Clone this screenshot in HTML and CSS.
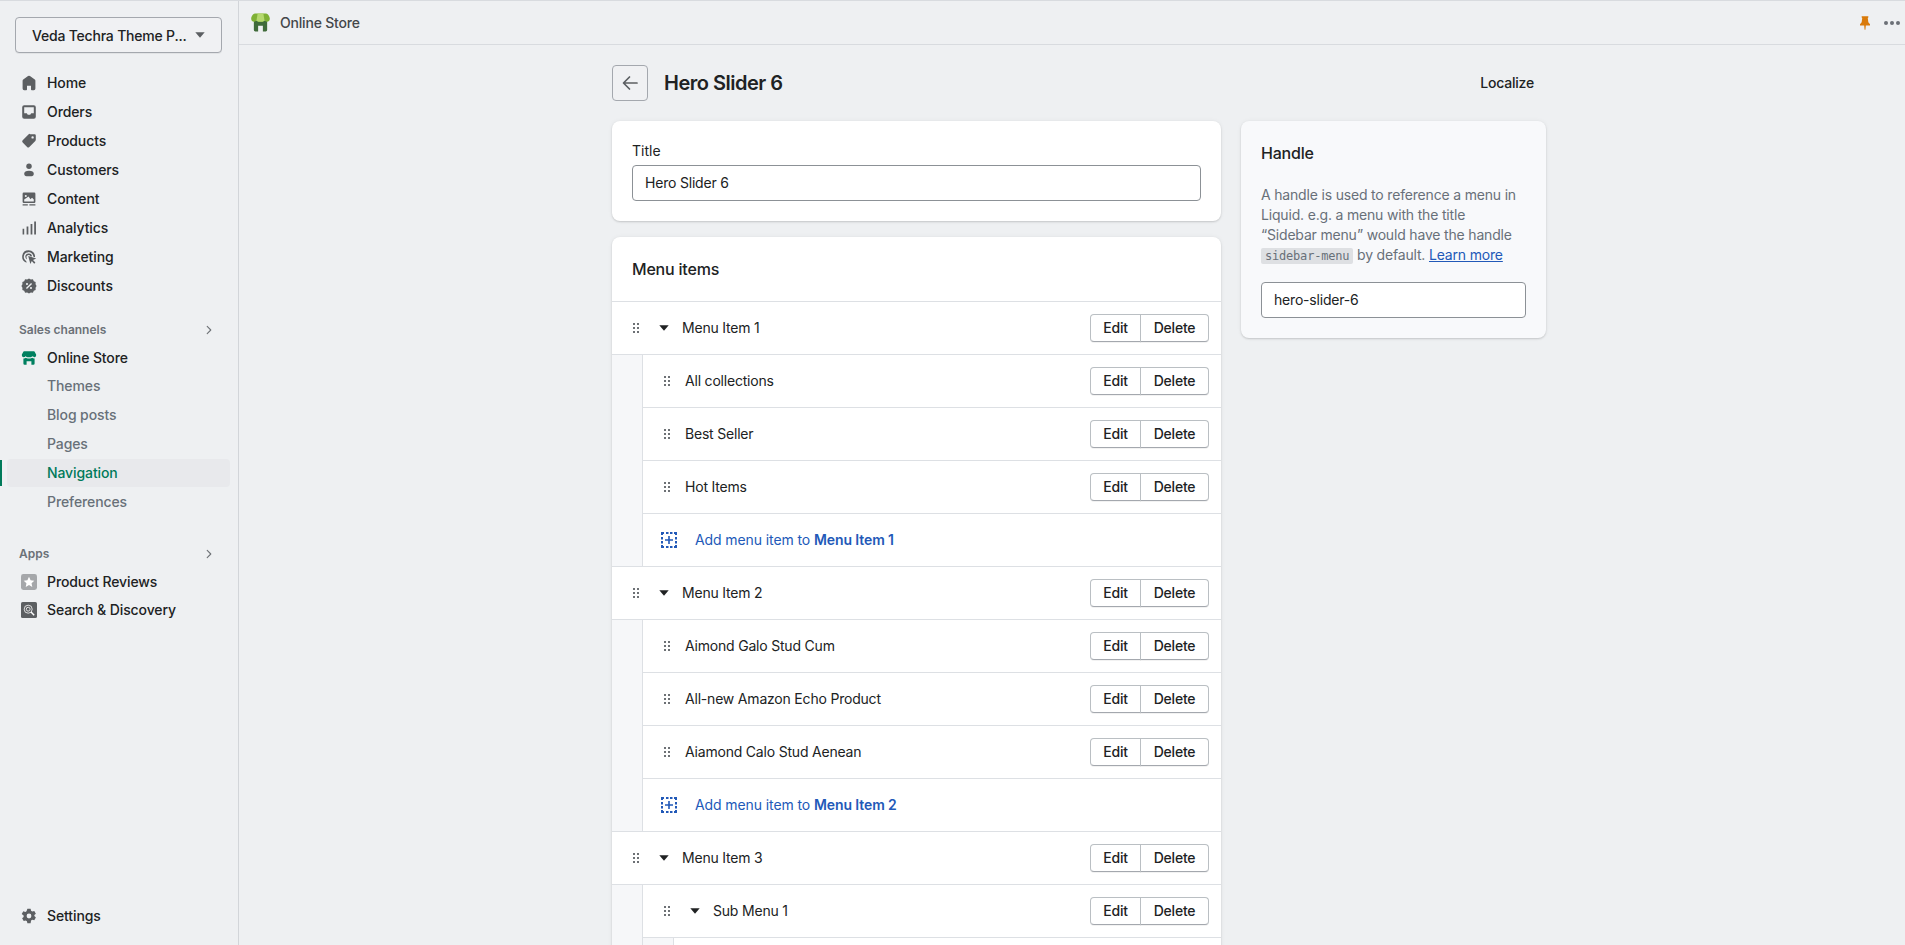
FILE: index.html
```html
<!DOCTYPE html>
<html lang="en">
<head>
  <meta charset="UTF-8" />
  <title>Hero Slider 6 – Navigation</title>
  <link rel="stylesheet" href="styles.css">
</head>
<body>
  <svg class="sprites" aria-hidden="true">
    <symbol id="i-drag" viewBox="0 0 7 10"><path d="M0 0h2v2H0zM4 0h2v2H4zM0 4h2v2H0zM4 4h2v2H4zM0 8h2v2H0zM4 8h2v2H4z"/></symbol>
    <symbol id="i-caret" viewBox="0 0 10 6"><path d="M0.300 0.200h9.400L5 5.800z"/></symbol>
    <symbol id="i-chevron" viewBox="0 0 20 20"><path d="M7 4l6 6-6 6" fill="none" stroke="currentColor" stroke-width="1.800" stroke-linecap="round" stroke-linejoin="round"/></symbol>
    <symbol id="i-add" viewBox="0 0 18 18">
      <path d="M1 1h3v2H3v1H1zM6 1h2.500v2H6zM10 1h2.500v2H10zM14 1h3v3h-2V3h-1zM1 6h2v2.500H1zM15 6h2v2.500h-2zM1 10h2v2.500H1zM15 10h2v2.500h-2zM1 14h2v1h1v2H1zM15 14h2v3h-3v-2h1zM6 15h2.500v2H6zM10 15h2.500v2H10z"/>
      <path d="M8.200 5h1.600v3.200H13v1.600H9.800V13H8.200V9.800H5V8.200h3.200z"/>
    </symbol>
  </svg>

  <div class="frame">
    <aside class="sidebar">
      <button class="store-picker" type="button">
        <span>Veda Techra Theme P...</span>
        <svg class="picker-caret" viewBox="0 0 10 6"><use href="#i-caret"/></svg>
      </button>

      <nav class="nav-main">
        <a class="nav-item">
          <svg class="nav-icon" viewBox="0 0 20 20"><path d="M18 7.300V17a2 2 0 0 1-2 2h-2.500a1 1 0 0 1-1-1v-4.500h-5V18a1 1 0 0 1-1 1H4a2 2 0 0 1-2-2V7.300a2 2 0 0 1 .800-1.600l6-4.400a2 2 0 0 1 2.400 0l6 4.400a2 2 0 0 1 .800 1.600z"/></svg>
          Home
        </a>
        <a class="nav-item">
          <svg class="nav-icon" viewBox="0 0 20 20"><path fill-rule="evenodd" d="M4 1.500h12A2.500 2.500 0 0 1 18.500 4v12a2.500 2.500 0 0 1-2.500 2.500H4A2.500 2.500 0 0 1 1.500 16V4A2.500 2.500 0 0 1 4 1.500zm0 2.500v7.500h3.200l1.300 2h3l1.300-2H16V4z"/></svg>
          Orders
        </a>
        <a class="nav-item">
          <svg class="nav-icon" viewBox="0 0 20 20"><path fill-rule="evenodd" d="M11.500 1.500H17a1.500 1.500 0 0 1 1.500 1.500v5.500a2 2 0 0 1-.600 1.400l-7.500 7.500a2 2 0 0 1-2.800 0l-5.500-5.500a2 2 0 0 1 0-2.800l7.500-7.500a2 2 0 0 1 1.400-.600zM14.500 7a1.500 1.500 0 1 0 0-3 1.500 1.500 0 0 0 0 3z"/></svg>
          Products
        </a>
        <a class="nav-item">
          <svg class="nav-icon" viewBox="0 0 20 20"><circle cx="10" cy="5.200" r="3.400"/><path d="M10 11c3.900 0 6 1.500 6 3.800 0 1.700-1.100 3-2.800 3H6.800C5.100 17.800 4 16.500 4 14.800 4 12.500 6.100 11 10 11z"/></svg>
          Customers
        </a>
        <a class="nav-item">
          <svg class="nav-icon" viewBox="0 0 20 20"><path fill-rule="evenodd" d="M3.500 2h13A1.500 1.500 0 0 1 18 3.500v10a1.500 1.500 0 0 1-1.500 1.500h-13A1.500 1.500 0 0 1 2 13.500v-10A1.500 1.500 0 0 1 3.500 2zM4 10.500V13h12v-2.500l-2.200-2.200-2 2-2.300-3.300zM6 7.500a1.300 1.300 0 1 0 0-2.600 1.300 1.300 0 0 0 0 2.600z"/><path d="M2 16.500h6.500V18H2zM10.500 16.500H18V18h-7.500z"/></svg>
          Content
        </a>
        <a class="nav-item">
          <svg class="nav-icon" viewBox="0 0 20 20"><path d="M2 11h2v7H2zM7 8h2.200v10H7zM12 5h2.200v13H12zM16.500 2h2.200v16h-2.200z"/></svg>
          Analytics
        </a>
        <a class="nav-item">
          <svg class="nav-icon" viewBox="0 0 20 20"><path d="M9.500 1.500a8 8 0 0 0-2.500 15.600l-.500-2A6 6 0 1 1 15.500 9.700l2 .6A8 8 0 0 0 9.500 1.500z"/><path d="M9.500 5.500a4 4 0 0 0-2 7.500l-.400-2A2.200 2.200 0 1 1 11.700 9l2 .5a4 4 0 0 0-4.200-4z"/><path d="M9 8.800l10 3-4 1.800 3 3.400-1.500 1.300-3-3.300-1.800 3.700z"/></svg>
          Marketing
        </a>
        <a class="nav-item">
          <svg class="nav-icon" viewBox="0 0 20 20"><path fill-rule="evenodd" d="M10 .500l2.300 1.300 2.600-.100 1.100 2.300 2.300 1.100-.100 2.600L19.500 10l-1.300 2.300.1 2.600-2.300 1.100-1.100 2.300-2.600-.100L10 19.500l-2.300-1.300-2.600.1L4 16l-2.300-1.100.1-2.600L.5 10l1.300-2.300-.1-2.600L4 4l1.100-2.300 2.600.1zM12.600 6.200L6.200 12.600l1.200 1.200 6.400-6.400zM7.500 8.800a1.300 1.300 0 1 0 0-2.600 1.300 1.300 0 0 0 0 2.600zM12.500 13.800a1.300 1.300 0 1 0 0-2.600 1.300 1.300 0 0 0 0 2.600z"/></svg>
          Discounts
        </a>
      </nav>

      <div class="nav-heading">
        <span>Sales channels</span>
        <svg class="nav-chevron"><use href="#i-chevron"/></svg>
      </div>
      <a class="nav-item nav-item-short">
        <svg class="nav-icon nav-icon-green" viewBox="0 0 20 20"><path d="M4 1.500h12a1 1 0 0 1 .900.500l2 3.500c.400 2-.700 3.500-2.300 3.500-1 0-2-.500-2.500-1.500-.500 1-1.300 1.500-2.300 1.500H8.200c-1 0-1.800-.500-2.300-1.500C5.400 8.500 4.400 9 3.400 9 1.800 9 .700 7.500 1.100 5.500l2-3.500A1 1 0 0 1 4 1.500z"/><path d="M3 10.500c1.100.200 2.100-.100 3-.800.900.600 1.700.800 2.500.8h3c.800 0 1.600-.200 2.500-.8.900.700 1.900 1 3 .8V17a1.500 1.500 0 0 1-1.500 1.500H13v-4.500H7v4.500H4.500A1.500 1.500 0 0 1 3 17z"/></svg>
        <span class="nav-strong">Online Store</span>
      </a>
      <a class="nav-sub">Themes</a>
      <a class="nav-sub">Blog posts</a>
      <a class="nav-sub">Pages</a>
      <a class="nav-sub nav-sub-active">Navigation</a>
      <a class="nav-sub">Preferences</a>

      <div class="nav-heading nav-heading-apps">
        <span>Apps</span>
        <svg class="nav-chevron"><use href="#i-chevron"/></svg>
      </div>
      <a class="nav-item nav-item-short">
        <svg class="nav-icon" viewBox="0 0 20 20"><rect width="20" height="20" rx="3" fill="#a5a7aa"/><path d="M10 3.500l2 4.200 4.600.6-3.400 3.200.9 4.600-4.100-2.300-4.100 2.300.9-4.600-3.400-3.200 4.600-.6z" fill="#fff"/></svg>
        <span class="nav-strong">Product Reviews</span>
      </a>
      <a class="nav-item nav-item-short">
        <svg class="nav-icon" viewBox="0 0 20 20"><rect width="20" height="20" rx="2" fill="#5c5f62"/><g fill="none" stroke="#fff" stroke-width="1"><circle cx="9" cy="9" r="5"/><circle cx="9" cy="9" r="2.400"/><path d="M12.500 12.500l4 4" stroke-width="1.800"/></g></svg>
        <span class="nav-strong">Search &amp; Discovery</span>
      </a>

      <a class="nav-item nav-settings">
        <svg class="nav-icon" viewBox="0 0 20 20"><path fill-rule="evenodd" d="M8 1h4l.600 2.500 1.500.900 2.500-.700 2 3.400-1.900 1.800v1.200l1.900 1.800-2 3.400-2.500-.700-1.500.9L12 19H8l-.600-2.500-1.500-.9-2.500.700-2-3.400 1.900-1.800V9.400L.9 7.600l2-3.400 2.500.7 1.500-.9zM10 13a3 3 0 1 0 0-6 3 3 0 0 0 0 6z"/></svg>
        Settings
      </a>
    </aside>

    <div class="workspace">
      <header class="topbar">
        <svg class="topbar-logo" viewBox="0 0 20 20">
          <path d="M3 8h14v10a1.500 1.500 0 0 1-1.500 1.500h-3V13.500h-5v6h-3A1.500 1.500 0 0 1 3 18z" fill="#3f6b3a"/>
          <path d="M4 .500h12c1.500 0 3.800 3 3.800 5.500 0 2-1.400 3.200-3 3.200-1.100 0-2-.500-2.600-1.500-.500 1-1.200 1.500-2.200 1.500H8c-1 0-1.700-.500-2.200-1.500C5.200 8.700 4.300 9.200 3.200 9.200c-1.600 0-3-1.200-3-3.200C.2 3.500 2.500.5 4 .5z" fill="#7fb135"/>
          <path d="M7 .500h6l1.200 7.200c-.500 1-1.200 1.500-2.200 1.500H8c-1 0-1.700-.500-2.200-1.500z" fill="#b5d96e"/>
        </svg>
        <span class="topbar-title">Online Store</span>
        <div class="topbar-actions">
          <svg class="topbar-pin" viewBox="0 0 12 16"><path d="M2 0h8v1.500L9.300 2l.7 5 2 2.500V11H7l-.5 5h-1L5 11H0V9.500L2 7l.7-5L2 1.500z"/></svg>
          <span class="topbar-dots"><i></i><i></i><i></i></span>
        </div>
      </header>

      <main class="page">
        <div class="page-head">
          <button class="back-btn" type="button" aria-label="Back">
            <svg viewBox="0 0 20 20"><path d="M17 10H4M9.500 4L3.500 10l6 6" fill="none" stroke="currentColor" stroke-width="1.700" stroke-linecap="round" stroke-linejoin="round"/></svg>
          </button>
          <h1>Hero Slider 6</h1>
          <span class="localize">Localize</span>
        </div>

        <div class="columns">
          <div class="col-main">
            <section class="card card-title">
              <label class="field-label" for="menu-title">Title</label>
              <input class="text-input" id="menu-title" type="text" value="Hero Slider 6" />
            </section>

            <section class="card card-menu">
              <h2>Menu items</h2>

              <div class="row">
                <svg class="drag"><use href="#i-drag"/></svg>
                <svg class="caret"><use href="#i-caret"/></svg>
                <span class="row-label">Menu Item 1</span>
                <div class="btn-group"><button type="button">Edit</button><button type="button">Delete</button></div>
              </div>
              <div class="nested">
                <div class="row">
                  <svg class="drag"><use href="#i-drag"/></svg>
                  <span class="row-label">All collections</span>
                  <div class="btn-group"><button type="button">Edit</button><button type="button">Delete</button></div>
                </div>
                <div class="row">
                  <svg class="drag"><use href="#i-drag"/></svg>
                  <span class="row-label">Best Seller</span>
                  <div class="btn-group"><button type="button">Edit</button><button type="button">Delete</button></div>
                </div>
                <div class="row">
                  <svg class="drag"><use href="#i-drag"/></svg>
                  <span class="row-label">Hot Items</span>
                  <div class="btn-group"><button type="button">Edit</button><button type="button">Delete</button></div>
                </div>
                <a class="row row-add">
                  <svg class="add-icon"><use href="#i-add"/></svg>
                  <span>Add menu item to <b>Menu Item 1</b></span>
                </a>
              </div>

              <div class="row">
                <svg class="drag"><use href="#i-drag"/></svg>
                <svg class="caret"><use href="#i-caret"/></svg>
                <span class="row-label">Menu Item 2</span>
                <div class="btn-group"><button type="button">Edit</button><button type="button">Delete</button></div>
              </div>
              <div class="nested">
                <div class="row">
                  <svg class="drag"><use href="#i-drag"/></svg>
                  <span class="row-label">Aimond Galo Stud Cum</span>
                  <div class="btn-group"><button type="button">Edit</button><button type="button">Delete</button></div>
                </div>
                <div class="row">
                  <svg class="drag"><use href="#i-drag"/></svg>
                  <span class="row-label">All-new Amazon Echo Product</span>
                  <div class="btn-group"><button type="button">Edit</button><button type="button">Delete</button></div>
                </div>
                <div class="row">
                  <svg class="drag"><use href="#i-drag"/></svg>
                  <span class="row-label">Aiamond Calo Stud Aenean</span>
                  <div class="btn-group"><button type="button">Edit</button><button type="button">Delete</button></div>
                </div>
                <a class="row row-add">
                  <svg class="add-icon"><use href="#i-add"/></svg>
                  <span>Add menu item to <b>Menu Item 2</b></span>
                </a>
              </div>

              <div class="row">
                <svg class="drag"><use href="#i-drag"/></svg>
                <svg class="caret"><use href="#i-caret"/></svg>
                <span class="row-label">Menu Item 3</span>
                <div class="btn-group"><button type="button">Edit</button><button type="button">Delete</button></div>
              </div>
              <div class="nested">
                <div class="row">
                  <svg class="drag"><use href="#i-drag"/></svg>
                  <svg class="caret"><use href="#i-caret"/></svg>
                  <span class="row-label">Sub Menu 1</span>
                  <div class="btn-group"><button type="button">Edit</button><button type="button">Delete</button></div>
                </div>
                <div class="nested">
                  <div class="row"></div>
                </div>
              </div>
            </section>
          </div>

          <aside class="card card-handle">
            <h2>Handle</h2>
            <p>A handle is used to reference a menu in Liquid. e.g. a menu with the title “Sidebar&nbsp;menu” would have the handle <code>sidebar-menu</code> by default. <a class="link">Learn more</a></p>
            <input class="text-input" type="text" value="hero-slider-6" />
          </aside>
        </div>
      </main>
    </div>
  </div>
</body>
</html>
```

FILE: styles.css
```css
* {
  box-sizing: border-box;
}
html, body {
  height: 100%;
}
body {
  margin: 0;
  overflow: hidden;
  background: #eef0f2;
  color: #202223;
  font-family: Inter, 'Noto Sans', sans-serif;
  font-size: 14px;
  line-height: 20px;
}
.sprites {
  display: none;
}
.frame {
  display: flex;
  height: 100%;
  border-top: 1px solid #d8dbdf;
}

/* sidebar */
.sidebar {
  flex: 0 0 239px;
  display: flex;
  flex-direction: column;
  padding: 16px 8px 15px 0;
  border-right: 1px solid #d2d5d9;
}
.store-picker {
  display: flex;
  align-items: center;
  justify-content: space-between;
  width: 207px;
  height: 36px;
  margin: 0 0 15px 15px;
  padding: 0 16px 0 16px;
  background: #f0f1f3;
  border: 1px solid #a4a8ae;
  border-radius: 4px;
  box-shadow: 0 1px 0 rgba(0,0,0,0.05);
  color: #202223;
  font: 500 14px Inter, sans-serif;
  letter-spacing: -0.2px;
}
.picker-caret {
  width: 10px;
  height: 6px;
  fill: #5c5f62;
}
.nav-main {
  display: flex;
  flex-direction: column;
}
.nav-item {
  display: flex;
  align-items: center;
  height: 29px;
  padding-left: 21px;
  font-weight: 500;
  letter-spacing: -0.1px;
}
.nav-item-short {
  height: 28px;
}
.nav-strong {
  color: #202223;
}
.nav-icon {
  flex: none;
  width: 16px;
  height: 16px;
  margin-right: 10px;
  fill: #5c5f62;
}
.nav-icon-green {
  fill: #008060;
}
.nav-heading {
  display: flex;
  align-items: center;
  justify-content: space-between;
  height: 28px;
  margin-top: 16px;
  padding: 0 15px 0 19px;
  color: #6b7177;
  font-size: 12px;
  font-weight: 600;
}
.nav-heading-apps {
  margin-top: 23px;
}
.nav-chevron {
  width: 12px;
  height: 12px;
  color: #6d7175;
}
.nav-sub {
  display: flex;
  align-items: center;
  height: 29px;
  padding-left: 47px;
  padding-bottom: 1px;
  color: #687079;
  font-weight: 500;
  letter-spacing: -0.1px;
}
.nav-sub-active {
  position: relative;
  color: #007a5a;
  background: #e8e9ec;
  height: 28px;
  margin: 0 0 1px 7px;
  padding-left: 40px;
  padding-bottom: 0;
  border-radius: 4px;
}
.nav-sub-active::before {
  content: "";
  position: absolute;
  left: -7px;
  top: 1px;
  bottom: 1px;
  width: 2px;
  background: #007a5a;
}
.nav-settings {
  margin-top: auto;
}

/* top bar */
.workspace {
  flex: 1;
  min-width: 0;
  display: flex;
  flex-direction: column;
}
.topbar {
  flex: none;
  display: flex;
  align-items: center;
  height: 44px;
  padding: 0 5px 0 12px;
  border-bottom: 1px solid #d8dbdf;
}
.topbar-logo {
  width: 19px;
  height: 19px;
  margin-right: 10px;
}
.topbar-title {
  color: #44474a;
  font-weight: 500;
  letter-spacing: -0.2px;
}
.topbar-actions {
  display: flex;
  align-items: center;
  gap: 14px;
  margin-left: auto;
}
.topbar-pin {
  width: 10px;
  height: 14px;
  fill: #d97a0a;
}
.topbar-dots {
  display: flex;
  gap: 2px;
}
.topbar-dots i {
  width: 4px;
  height: 4px;
  border-radius: 50%;
  background: #6b7077;
}

/* page */
.page {
  flex: 1;
  min-height: 0;
  width: 934px;
  margin-left: 373px;
}
.page-head {
  display: flex;
  align-items: center;
  height: 36px;
  margin: 20px 0;
}
.back-btn {
  display: flex;
  align-items: center;
  justify-content: center;
  width: 36px;
  height: 36px;
  margin-right: 16px;
  padding: 0;
  background: #f0f1f3;
  border: 1px solid #a4a8ae;
  border-radius: 4px;
  color: #5c5f62;
}
.back-btn svg {
  width: 20px;
  height: 20px;
}
h1 {
  margin: 0;
  font-size: 20px;
  font-weight: 600;
  line-height: 28px;
  letter-spacing: -0.5px;
}
.localize {
  margin-left: auto;
  margin-right: 12px;
  font-weight: 500;
  letter-spacing: -0.2px;
}
.columns {
  display: grid;
  grid-template-columns: 609px 305px;
  gap: 20px;
  align-items: start;
}
.col-main {
  display: flex;
  flex-direction: column;
  gap: 16px;
}
.card {
  background: #fff;
  border-radius: 8px;
  box-shadow: 0 0 5px rgba(23,24,24,0.05), 0 1px 2px rgba(0,0,0,0.15);
}
.card-title {
  padding: 20px;
  height: 100px;
}
.field-label {
  display: block;
  margin-bottom: 4px;
  line-height: 20px;
}
.text-input {
  display: block;
  width: 100%;
  height: 36px;
  padding: 0 12px 1px;
  background: #fff;
  border: 1px solid #8c9196;
  border-radius: 4px;
  color: #202223;
  font: 14px Inter, sans-serif;
  letter-spacing: -0.2px;
}
.card-menu {
  overflow: hidden;
  border-radius: 8px 8px 0 0;
}
.card-menu h2 {
  display: flex;
  align-items: center;
  height: 64px;
  margin: 0;
  padding-left: 20px;
  font-size: 16px;
  font-weight: 500;
  letter-spacing: -0.2px;
}
.row {
  display: flex;
  align-items: center;
  height: 53px;
  padding: 0 12px 0 20px;
  background: #fff;
  border-top: 1px solid #dde0e4;
  letter-spacing: -0.2px;
}
.nested {
  padding-left: 30px;
  background: #f6f7f9;
  border-top: 1px solid #dde0e4;
}
.nested > .row {
  border-left: 1px solid #dde0e4;
  padding-left: 20px;
}
.nested > .row:first-child {
  border-top: none;
  height: 52px;
}
.nested > .nested {
  border-left: 1px solid #dde0e4;
}
.drag {
  flex: none;
  width: 7px;
  height: 10px;
  margin-left: 1px;
  fill: #6d7175;
}
.caret {
  flex: none;
  width: 10px;
  height: 6px;
  margin-left: 19px;
  fill: #202223;
}
.row-label {
  margin-left: 14px;
}
.caret + .row-label {
  margin-left: 13px;
}
.btn-group {
  display: flex;
  margin-left: auto;
}
.btn-group button {
  height: 28px;
  padding: 0 0 1px;
  background: #fff;
  border: 1px solid #babfc3;
  border-bottom-color: #a4a8ae;
  color: #202223;
  font: 500 14px Inter, sans-serif;
  letter-spacing: -0.2px;
  box-shadow: 0 1px 0 rgba(0,0,0,0.05);
}
.btn-group button:first-child {
  width: 51px;
  border-radius: 4px 0 0 4px;
}
.btn-group button:last-child {
  width: 69px;
  margin-left: -1px;
  border-radius: 0 4px 4px 0;
}
.row-add {
  color: #2259b8;
  letter-spacing: -0.1px;
}
.nested > .row-add {
  padding-left: 17px;
}
.row-add b {
  font-weight: 600;
}
.add-icon {
  flex: none;
  width: 18px;
  height: 18px;
  margin-right: 17px;
  fill: #2259b8;
}

/* handle card */
.card-handle {
  height: 217px;
  padding: 20px;
  background: #f8f9fb;
}
.card-handle h2 {
  margin: 0 0 20px;
  font-size: 16px;
  font-weight: 500;
  line-height: 24px;
  letter-spacing: -0.2px;
}
.card-handle p {
  margin: 0 0 16px;
  color: #687079;
  font-size: 14px;
  letter-spacing: -0.18px;
}
.card-handle code {
  padding: 1px 4px;
  background: #dee0e3;
  border-radius: 2px;
  font-family: 'DejaVu Sans Mono', 'Liberation Mono', monospace;
  font-size: 12px;
  letter-spacing: -0.2px;
  white-space: nowrap;
}
.link {
  color: #2259b8;
  text-decoration: underline;
}
```
